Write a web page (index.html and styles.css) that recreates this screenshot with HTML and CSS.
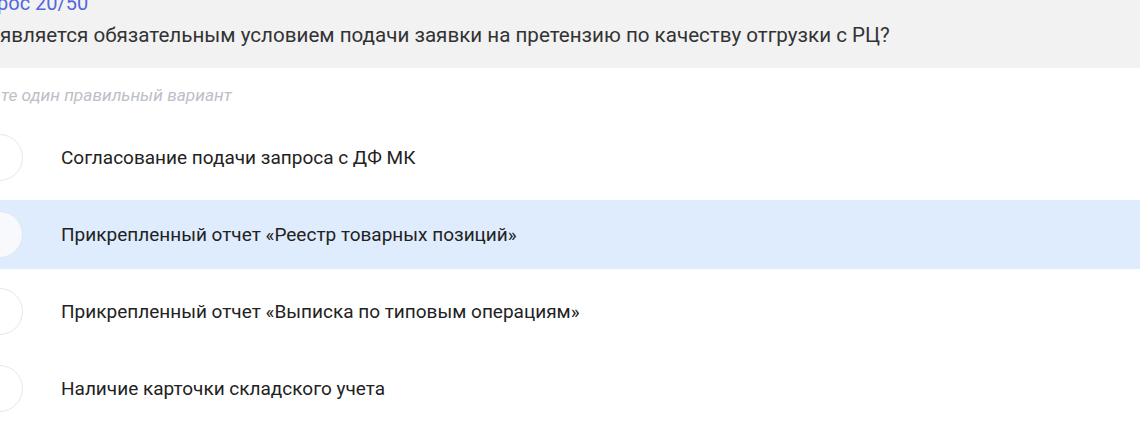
FILE: index.html
```html
<!DOCTYPE html>
<html lang="ru">
<head>
<meta charset="utf-8">
<title>Вопрос 20/50</title>
<link rel="stylesheet" href="styles.css">
</head>
<body>
<div class="quiz">
  <header class="quiz-head">
    <div class="quiz-counter">рос 20/50</div>
    <div class="quiz-question">является обязательным условием подачи заявки на претензию по качеству отгрузки с РЦ?</div>
  </header>
  <div class="quiz-hint">те один правильный вариант</div>
  <ul class="options">
    <li class="option"><span class="radio"></span><span class="option-text">Согласование подачи запроса с ДФ МК</span></li>
    <li class="option option--hover"><span class="radio"></span><span class="option-text">Прикрепленный отчет «Реестр товарных позиций»</span></li>
    <li class="option"><span class="radio"></span><span class="option-text">Прикрепленный отчет «Выписка по типовым операциям»</span></li>
    <li class="option"><span class="radio"></span><span class="option-text">Наличие карточки складского учета</span></li>
  </ul>
</div>
</body>
</html>
```

FILE: styles.css
```css
* { box-sizing: border-box; }
html, body {
  margin: 0;
  padding: 0;
  background: #ffffff;
  overflow: hidden;
}
body {
  font-family: Roboto, "Noto Sans", "Liberation Sans", sans-serif;
  color: #222222;
}
.quiz {
  width: 1140px;
  height: 431px;
  display: flex;
  flex-direction: column;
}
.quiz-head {
  background: #f2f2f3;
  height: 68px;
  display: flex;
  flex-direction: column;
  overflow: hidden;
  flex-shrink: 0;
}
.quiz-counter {
  font-size: 20px;
  line-height: 20px;
  margin-top: -7px;
  margin-left: -3px;
  color: #5567dc;
  white-space: nowrap;
}
.quiz-question {
  font-size: 20.6px;
  line-height: 26px;
  margin-top: 9px;
  color: #333333;
  white-space: nowrap;
}
.quiz-hint {
  font-size: 17.3px;
  font-style: italic;
  color: #bcc0c8;
  line-height: 20px;
  margin-top: 17px;
  padding-left: 1px;
  white-space: nowrap;
}
.options {
  list-style: none;
  margin: 18px 0 0;
  padding: 0;
  display: flex;
  flex-direction: column;
  gap: 8px;
}
.option {
  position: relative;
  height: 69px;
  display: flex;
  align-items: center;
  padding-left: 61px;
  flex-shrink: 0;
}
.option--hover {
  background: #deecfd;
}
.radio {
  position: absolute;
  left: -24px;
  top: 50%;
  width: 47px;
  height: 47px;
  margin-top: -23.5px;
  border-radius: 50%;
  background: #ffffff;
  border: 1px solid #e6e7ea;
}
.option--hover .radio {
  background: #f7f9fd;
  border-color: #e3e6ec;
}
.option-text {
  font-size: 19px;
  line-height: 24px;
  color: #222222;
}
```
